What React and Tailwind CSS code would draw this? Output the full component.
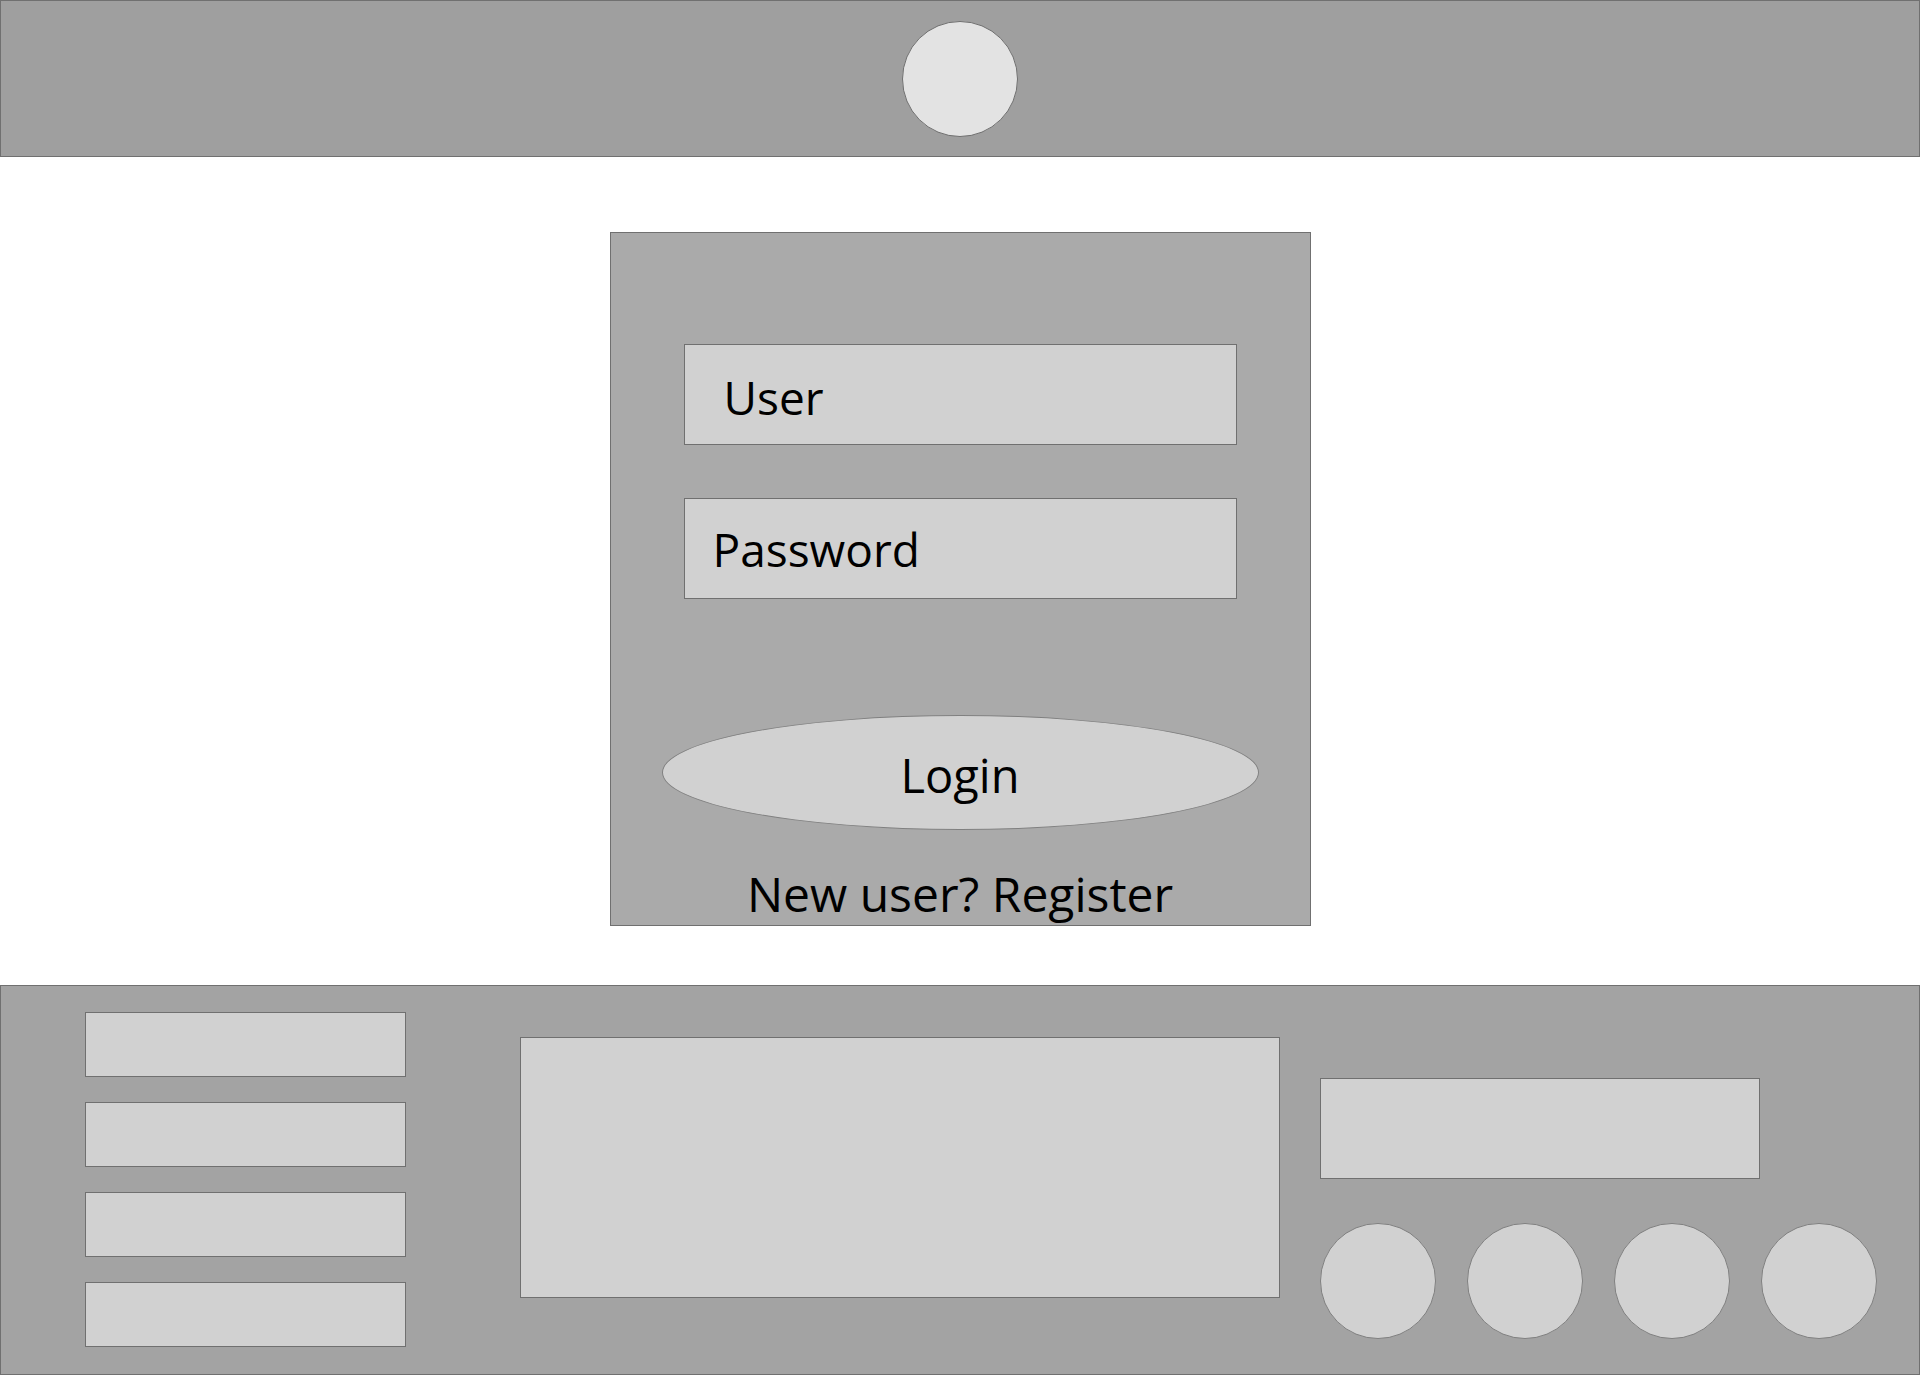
import React from 'react';

const font = { fontFamily: '"Open Sans", "Noto Sans", sans-serif' };

function Field({ label, pad }) {
  return (
    <div className={`flex h-[101px] w-[553px] items-center border border-[#707070] bg-[#d1d1d1] ${pad}`}>
      <span className="text-[46px] leading-none text-black">{label}</span>
    </div>
  );
}

export default function App() {
  return (
    <div className="flex h-[1375px] w-[1920px] flex-col bg-white" style={font}>
      {/* top bar with avatar */}
      <header className="flex h-[157px] shrink-0 items-center justify-center border border-[#707070] bg-[#9f9f9f]">
        <div className="h-[116px] w-[116px] rounded-full border border-[#707070] bg-[#e3e3e3]" />
      </header>

      {/* login card */}
      <main className="flex flex-1 justify-center pt-[75px]">
        <div className="flex h-[694px] w-[701px] flex-col items-center border border-[#707070] bg-[#aaaaaa] pt-[111px]">
          <Field label="User" pad="pl-[39px] pt-[5px]" />
          <div className="mt-[53px]">
            <Field label="Password" pad="pl-[28px] pt-[1px]" />
          </div>
          <button className="mt-[116px] flex h-[115px] w-[597px] items-center justify-center rounded-[50%] border border-[#808080] bg-[#d1d1d1] pt-[5px] text-[47px] leading-none text-black">
            Login
          </button>
          <p className="mt-[40px] text-[48px] leading-none text-black">New user? Register</p>
        </div>
      </main>

      {/* bottom panel */}
      <footer className="flex h-[390px] shrink-0 items-start border border-[#707070] bg-[#a3a3a3] pl-[84px]">
        <div className="mt-[26px] flex flex-col gap-[25px]">
          {[1, 2, 3, 4].map(i => (
            <div key={i} className="h-[65px] w-[321px] border border-[#707070] bg-[#d1d1d1]" />
          ))}
        </div>
        <div className="ml-[114px] mt-[51px] h-[261px] w-[760px] border border-[#707070] bg-[#d1d1d1]" />
        <div className="ml-[40px] mt-[92px] flex flex-col">
          <div className="h-[101px] w-[440px] border border-[#707070] bg-[#d1d1d1]" />
          <div className="mt-[44px] flex gap-[31px]">
            {[1, 2, 3, 4].map(i => (
              <div key={i} className="h-[116px] w-[116px] rounded-full border border-[#808080] bg-[#d1d1d1]" />
            ))}
          </div>
        </div>
      </footer>
    </div>
  );
}
